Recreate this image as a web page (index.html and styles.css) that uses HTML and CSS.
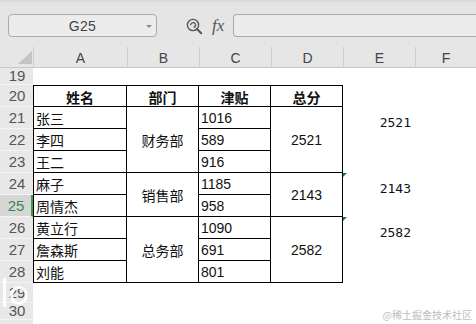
FILE: index.html
```html
<!DOCTYPE html>
<html lang="zh">
<head>
<meta charset="utf-8">
<link rel="stylesheet" href="styles.css">
</head>
<body>
<div class="app">
  <div class="toolbar">
    <div class="namebox"><span class="nb-text">G25</span><span class="nb-arrow"></span></div>
    <svg class="zoomicon" width="17" height="17" viewBox="0 0 17 17">
      <circle cx="7" cy="7" r="5.6" fill="none" stroke="#555" stroke-width="1.4"/>
      <path d="M4.6 7.2a2.5 2.5 0 1 1 4.6 1.3" fill="none" stroke="#555" stroke-width="1.3"/>
      <path d="M7.8 8.2l1.6 1.6" stroke="#555" stroke-width="1.3"/>
      <path d="M11 11l4.2 4.2" stroke="#555" stroke-width="2" stroke-linecap="round"/>
    </svg>
    <span class="fx">fx</span>
    <div class="formula"></div>
  </div>
  <div class="sheet">
    <div class="corner"><span class="tri"></span></div>
    <div class="ch">A</div><div class="ch">B</div><div class="ch">C</div><div class="ch">D</div><div class="ch">E</div><div class="ch last">F</div>

    <div class="rh">19</div><div class="blank"></div>

    <div class="rh">20</div>
    <div class="t tl th hd">姓名</div><div class="t th hd">部门</div><div class="t th hd">津贴</div><div class="t th hd">总分</div><div></div><div></div>

    <div class="rh">21</div>
    <div class="t tl">张三</div><div class="t c m3">财务部</div><div class="t">1016</div><div class="t c m3">2521</div><div class="ev">2521</div><div></div>
    <div class="rh">22</div>
    <div class="t tl">李四</div><div class="t">589</div><div></div><div></div>
    <div class="rh">23</div>
    <div class="t tl">王二</div><div class="t">916</div><div></div><div></div>

    <div class="rh">24</div>
    <div class="t tl">麻子</div><div class="t c m2">销售部</div><div class="t">1185</div><div class="t c m2">2143</div><div class="ev flag">2143</div><div></div>
    <div class="rh sel">25</div>
    <div class="t tl">周情杰</div><div class="t">958</div><div></div><div></div>

    <div class="rh">26</div>
    <div class="t tl">黄立行</div><div class="t c m3">总务部</div><div class="t">1090</div><div class="t c m3">2582</div><div class="ev flag">2582</div><div></div>
    <div class="rh">27</div>
    <div class="t tl">詹森斯</div><div class="t">691</div><div></div><div></div>
    <div class="rh">28</div>
    <div class="t tl">刘能</div><div class="t">801</div><div></div><div></div>

    <div class="rh">29</div><div class="blank"></div>
    <div class="rh">30</div><div class="blank"></div>
    <div class="rh cut">31</div><div class="blank"></div>
  </div>
  <div class="ghost-bar"></div>
  <div class="ghost-ring"></div>
  <div class="watermark">@稀土掘金技术社区</div>
</div>
</body>
</html>
```

FILE: styles.css
```css
* { box-sizing: border-box; }
html, body { margin: 0; padding: 0; }
body {
  width: 476px;
  height: 324px;
  overflow: hidden;
  background: #ffffff;
  font-family: "Liberation Sans", "Noto Sans CJK SC", sans-serif;
}
.app {
  position: relative;
  width: 476px;
  height: 324px;
  overflow: hidden;
}
.toolbar {
  height: 47px;
  background: linear-gradient(#d6d6d6 0, #e4e4e4 3px, #e6e6e6 100%);
  display: flex;
  align-items: flex-start;
  padding: 14px 0 0 8px;
}
.namebox {
  width: 149px;
  height: 23px;
  border: 1px solid #ababab;
  border-radius: 4px;
  background: #ececec;
  display: flex;
  align-items: center;
  justify-content: center;
  position: relative;
}
.nb-text {
  font-size: 14px;
  color: #444;
  letter-spacing: 0.3px;
}
.nb-arrow {
  position: absolute;
  right: 4px;
  top: 10px;
  width: 0; height: 0;
  border-left: 3px solid transparent;
  border-right: 3px solid transparent;
  border-top: 3px solid #8a8a8a;
}
.zoomicon {
  margin: 4px 0 0 29px;
}
.fx {
  font-family: "Liberation Serif", serif;
  font-style: italic;
  font-size: 17px;
  color: #555;
  margin: 2px 0 0 9px;
  line-height: 20px;
}
.formula {
  margin-left: 9px;
  flex: 1;
  height: 23px;
  border: 1px solid #ababab;
  border-right: none;
  border-radius: 4px 0 0 4px;
  background: #ececec;
}
.sheet {
  display: grid;
  grid-template-columns: 33px 94px 72px 72px 72px 72px 1fr;
  grid-template-rows: 21px 17px repeat(9, 22px) 20px 17px 1fr;
  height: 277px;
  font-size: 14px;
  color: #111;
}
.corner {
  background: #e6e6e6;
  border-bottom: 1px solid #c8c8c8;
  position: relative;
}
.tri {
  position: absolute;
  right: 1px;
  bottom: 3px;
  width: 0; height: 0;
  border-left: 14px solid transparent;
  border-bottom: 13px solid #c4c4c4;
}
.ch {
  background: #e6e6e6;
  border-bottom: 1px solid #c8c8c8;
  border-left: 1px solid #cdcdcd;
  color: #444;
  font-size: 14px;
  display: flex;
  align-items: center;
  justify-content: center;
  padding-top: 2px;
}
.rh {
  background: #e8e8e8;
  border-bottom: 1px solid #f4f4f4;
  color: #555;
  font-size: 15px;
  line-height: 16px;
  display: flex;
  align-items: center;
  justify-content: center;
  padding-left: 1px;
  overflow: hidden;
}
.rh.cut {
  align-items: flex-start;
  padding-top: 1px;
  border-bottom: none;
}
.rh.sel {
  background: #d6d6d6;
  color: #3b8a4b;
  border-right: 2px solid #3f9a52;
}
.blank { grid-column: span 6; }
.t {
  border-right: 1px solid #000;
  border-bottom: 1px solid #000;
  display: flex;
  align-items: center;
  padding: 1px 0 0 2px;
  white-space: nowrap;
}
.tl { border-left: 1px solid #000; }
.th { border-top: 1px solid #000; }
.hd {
  font-weight: bold;
  justify-content: center;
  padding-left: 0;
}
.c {
  justify-content: center;
  padding-left: 0;
}
.m3 { grid-row: span 3; }
.m2 { grid-row: span 2; }
.ev {
  display: flex;
  align-items: center;
  justify-content: flex-end;
  padding: 8px 4px 0 0;
  position: relative;
  font-family: "DejaVu Sans Mono", "Liberation Mono", monospace;
  font-size: 13px;
  color: #111;
}
.flag::before {
  content: "";
  position: absolute;
  left: 0;
  top: 0;
  width: 0; height: 0;
  border-top: 4px solid #1f7a3a;
  border-right: 4px solid transparent;
}
.ghost-bar {
  position: absolute;
  left: 3px;
  top: 278px;
  width: 3px;
  height: 29px;
  background: rgba(255, 255, 255, 0.92);
}
.ghost-ring {
  position: absolute;
  left: 10px;
  top: 286px;
  width: 18px;
  height: 19px;
  border: 3px solid rgba(255, 255, 255, 0.92);
  border-radius: 50%;
}
.watermark {
  position: absolute;
  right: 4px;
  bottom: 3px;
  font-family: "Noto Sans CJK SC", sans-serif;
  font-size: 10px;
  line-height: 12px;
  color: #bdbdbd;
}
```
